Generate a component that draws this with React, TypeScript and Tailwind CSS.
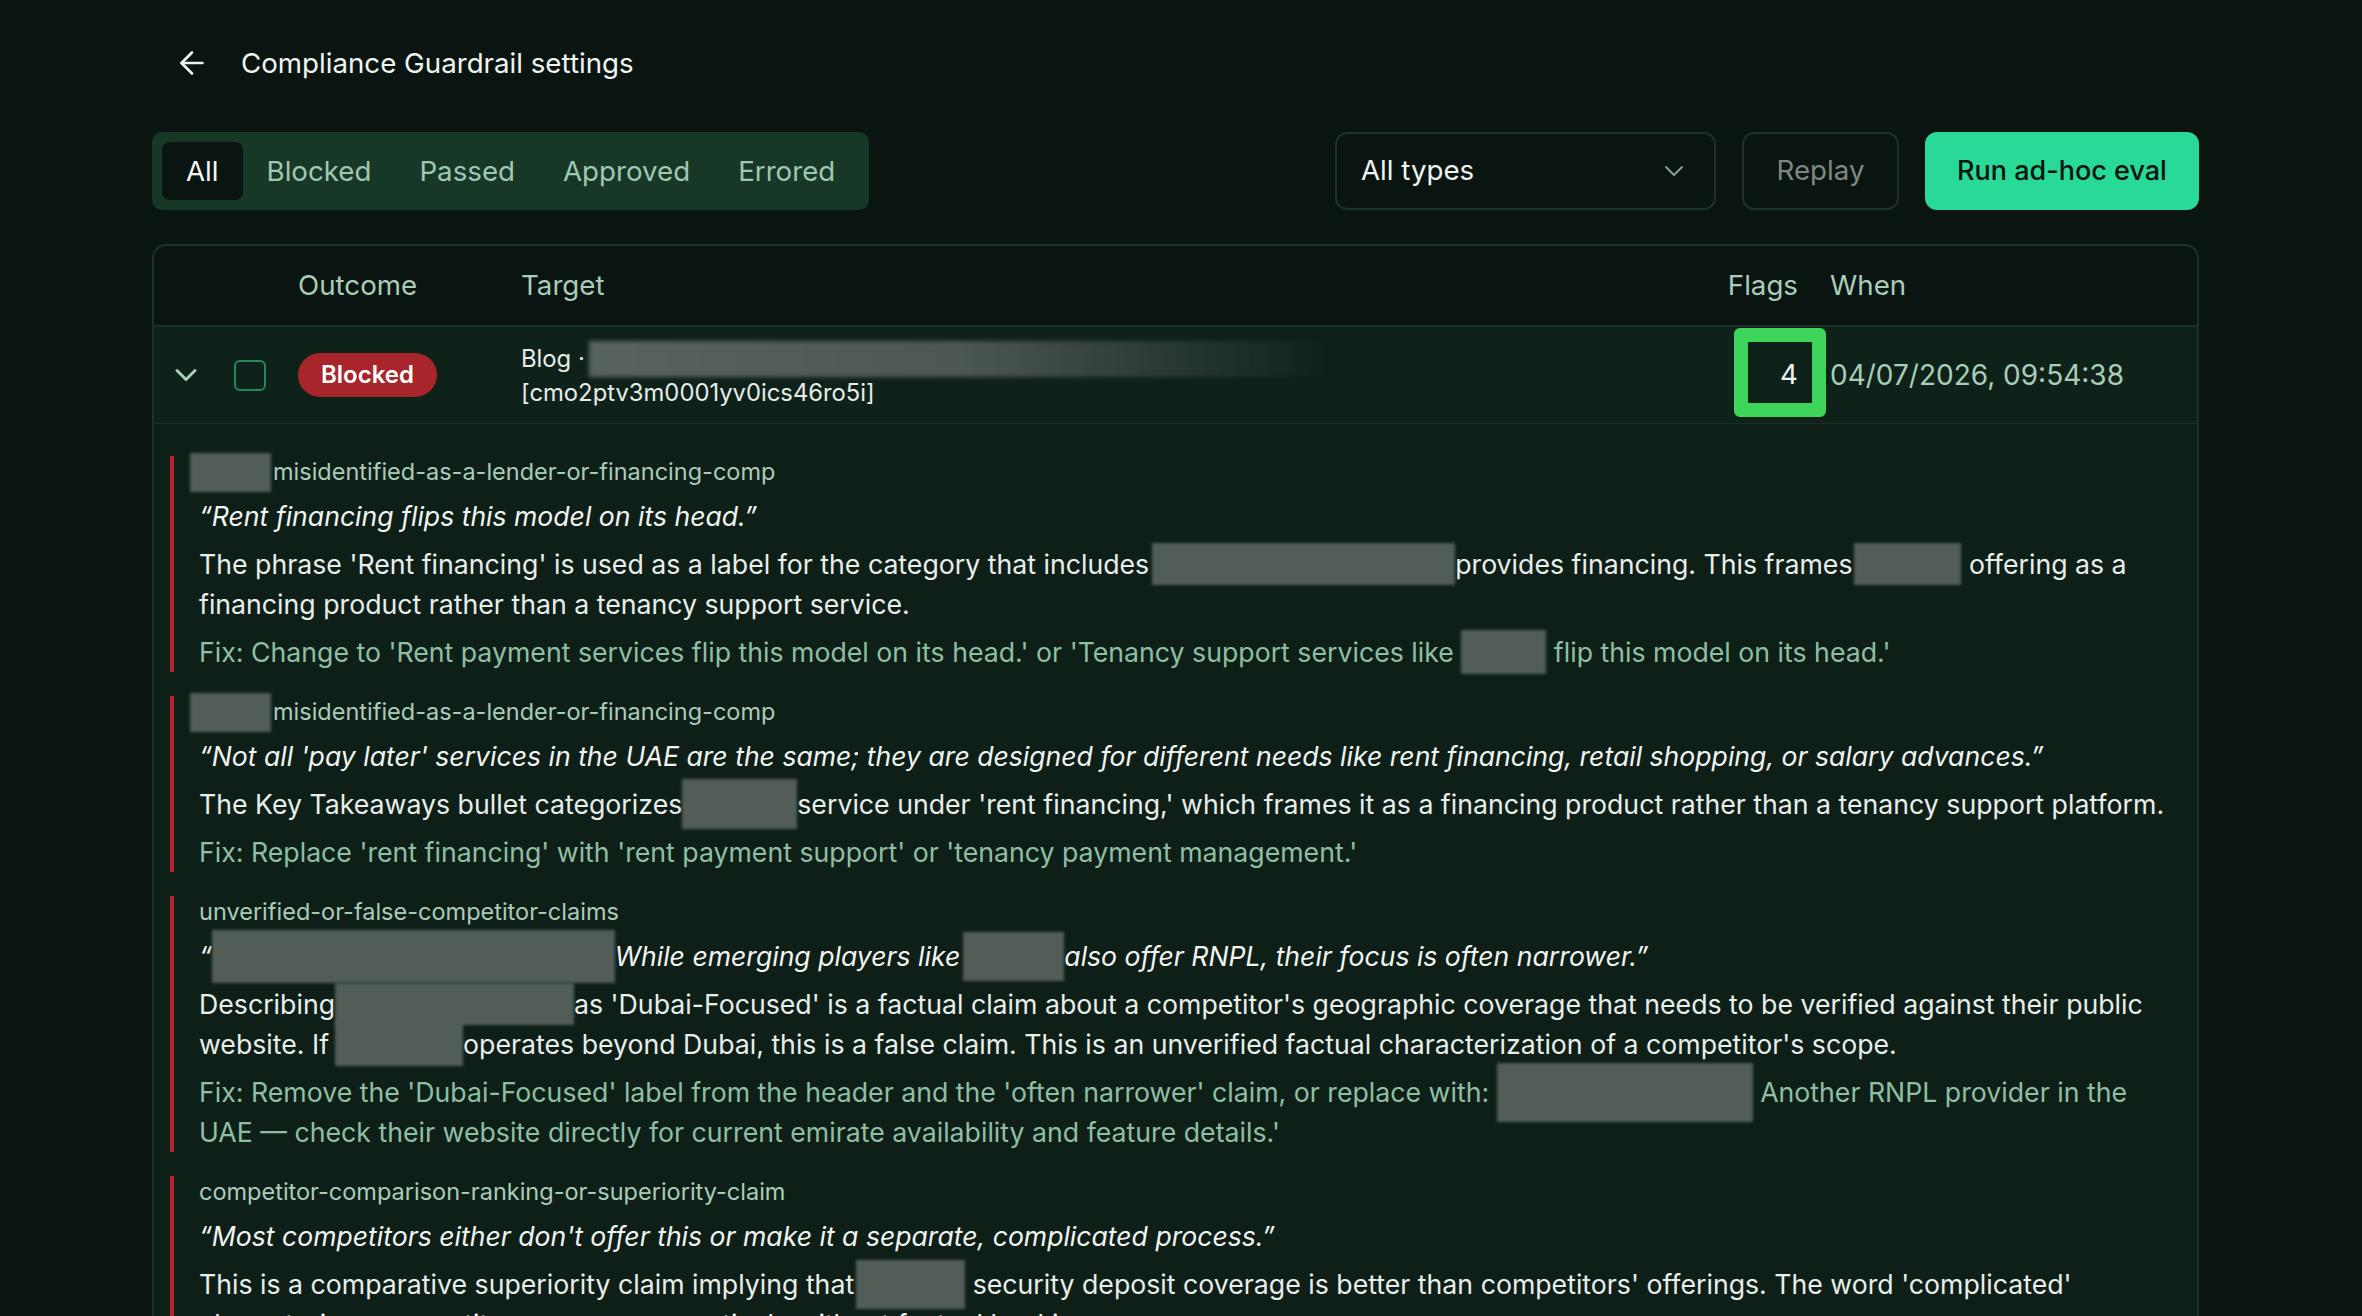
import React from 'react';
import { ArrowLeft, ChevronDown } from 'lucide-react';

const tabs = ['All', 'Blocked', 'Passed', 'Approved', 'Errored'];

// grey redaction block that sits inline with the text; negative margins keep
// the line box at its normal height
const Redact: React.FC<{ className: string }> = ({ className }) => (
  <span className={`inline-block align-top bg-[#535d58] blur-[1.5px] ${className}`} />
);

interface FlagProps {
  tag: React.ReactNode;
  quote: React.ReactNode;
  body: React.ReactNode;
  fix: React.ReactNode;
}

const FlagItem: React.FC<FlagProps> = ({ tag, quote, body, fix }) => (
  <div className="ml-[16px] border-l-4 border-[#b3262b] pl-[25px] text-[26.7px]">
    <div className="text-[23.5px] leading-[32px] text-[#a9cdb9]">{tag}</div>
    <div className="mt-2 text-[26.6px] italic leading-[40px] text-[#f1f5f2]">{quote}</div>
    <div className="mt-2 leading-[40px] text-[#e8eeea]">{body}</div>
    <div className="mt-2 leading-[40px] text-[#8fbfa3]">{fix}</div>
  </div>
);

const rowCols = 'grid grid-cols-[64px_80px_223px_1205px_104px_1fr]';

export default function App() {
  return (
    <div className="min-h-screen bg-[#0a1410] font-['Inter','Noto_Sans',sans-serif] text-[27.7px] text-[#f0f4f1]">
      <div className="ml-[152px] w-[2047px] pt-[41px]">
        {/* page header */}
        <div className="flex h-[44px] items-center gap-[31px] pl-[22px]">
          <ArrowLeft size={36} strokeWidth={1.75} className="text-[#f0f4f1]" />
          <h1 className="leading-[44px]">Compliance Guardrail settings</h1>
        </div>

        {/* filters + actions */}
        <div className="mt-[47px] flex items-center justify-between">
          <div className="flex rounded-[10px] bg-[#173827] p-[10px]">
            {tabs.map((t, i) => (
              <button
                key={t}
                className={`h-[58px] rounded-[8px] px-6 leading-[58px] ${
                  i === 0 ? 'bg-[#0a1410] text-[#f5f8f6]' : 'text-[#9fc7b2]'
                }`}
              >
                {t}
              </button>
            ))}
          </div>
          <div className="flex items-center gap-[26px]">
            <div className="flex h-[78px] w-[381px] items-center justify-between rounded-[12px] border-2 border-[#1b3227] pl-[24px] pr-[24px]">
              <span>All types</span>
              <ChevronDown size={32} strokeWidth={1.5} className="text-[#8d9a93]" />
            </div>
            <button className="h-[78px] w-[157px] rounded-[12px] border-2 border-[#1b3227] text-[#7d8882]">
              Replay
            </button>
            <button className="h-[78px] w-[274px] rounded-[12px] bg-[#29d997] text-[27px] font-medium text-[#07150e]">
              Run ad-hoc eval
            </button>
          </div>
        </div>

        {/* results table */}
        <div className="mt-[34px] overflow-hidden rounded-t-[14px] border-2 border-b-0 border-[#1b3227]">
          <div className={`${rowCols} h-[79px] items-center text-[#a9cdb9]`}>
            <div />
            <div />
            <div>Outcome</div>
            <div>Target</div>
            <div className="pr-[32px] text-right">Flags</div>
            <div>When</div>
          </div>

          <div className={`${rowCols} h-[98px] items-center border-t-2 border-[#1b3227] bg-[#0f221a]`}>
            <div className="flex justify-center">
              <ChevronDown size={36} strokeWidth={2} className="text-[#a9cdb9]" />
            </div>
            <div className="pl-[16px]">
              <div className="h-[31px] w-[32px] rounded-[6px] border-2 border-[#23885a]" />
            </div>
            <div>
              <span className="inline-flex h-[44px] items-center rounded-full bg-[#a8262b] px-[23px] text-[24px] font-semibold text-white">
                Blocked
              </span>
            </div>
            <div className="text-[23.8px] leading-[32px] text-[#e6ece8]">
              <div className="flex items-center">
                <span>Blog ·</span>
                <span className="ml-[4px] inline-block h-[36px] w-[740px] bg-linear-to-r from-[#58635d] via-[#4d5853] to-transparent blur-[2px]" />
              </div>
              <div>[cmo2ptv3m0001yv0ics46ro5i]</div>
            </div>
            <div className="relative flex h-full items-center justify-end pr-[32px]">
              <div className="absolute bottom-[6px] left-[8px] right-[4px] top-[1px] rounded-[6px] border-[14px] border-[#3ed65a]" />
              <span className="relative">4</span>
            </div>
            <div className="text-[28px] text-[#a9cdb9]">04/07/2026, 09:54:38</div>
          </div>

          {/* expanded flag details */}
          <div className="flex flex-col gap-[24px] border-t border-[#1a2f25] bg-[#0e1f18] pb-[40px] pr-[20px] pt-[32px]">
            <FlagItem
              tag={
                <>
                  <Redact className="-mb-[4px] -ml-[9px] -mt-[3px] mr-[2px] h-[39px] w-[81px]" />
                  misidentified-as-a-lender-or-financing-comp
                </>
              }
              quote="“Rent financing flips this model on its head.”"
              body={
                <>
                  The phrase 'Rent financing' is used as a label for the category that includes
                  <Redact className="-my-[1px] ml-[3px] h-[42px] w-[303px]" />
                  provides financing. This frames
                  <Redact className="-my-[1px] ml-[2px] h-[42px] w-[107px]" /> offering as a financing
                  product rather than a tenancy support service.
                </>
              }
              fix={
                <>
                  Fix: Change to 'Rent payment services flip this model on its head.' or 'Tenancy support
                  services like <Redact className="-my-[2px] h-[44px] w-[85px]" /> flip this model on its
                  head.'
                </>
              }
            />
            <FlagItem
              tag={
                <>
                  <Redact className="-mb-[4px] -ml-[9px] -mt-[3px] mr-[2px] h-[39px] w-[81px]" />
                  misidentified-as-a-lender-or-financing-comp
                </>
              }
              quote="“Not all 'pay later' services in the UAE are the same; they are designed for different needs like rent financing, retail shopping, or salary advances.”"
              body={
                <>
                  The Key Takeaways bullet categorizes
                  <Redact className="-my-[5px] h-[50px] w-[115px]" />
                  service under 'rent financing,' which frames it as a financing product rather than a
                  tenancy support platform.
                </>
              }
              fix="Fix: Replace 'rent financing' with 'rent payment support' or 'tenancy payment management.'"
            />
            <FlagItem
              tag="unverified-or-false-competitor-claims"
              quote={
                <>
                  “<Redact className="-mb-[7px] -mt-[6px] h-[53px] w-[403px]" />
                  While emerging players like
                  <Redact className="-mb-[5px] -mt-[4px] ml-[3px] h-[49px] w-[101px]" />
                  also offer RNPL, their focus is often narrower.”
                </>
              }
              body={
                <>
                  Describing
                  <Redact className="-my-[1px] h-[42px] w-[239px]" />
                  as 'Dubai-Focused' is a factual claim about a competitor's geographic coverage that needs
                  to be verified against their public website. If
                  <Redact className="-my-[2px] ml-[6px] h-[44px] w-[128px]" />
                  operates beyond Dubai, this is a false claim. This is an unverified factual
                  characterization of a competitor's scope.
                </>
              }
              fix={
                <>
                  Fix: Remove the 'Dubai-Focused' label from the header and the 'often narrower' claim, or
                  replace with: <Redact className="-mb-[10px] -mt-[9px] h-[59px] w-[256px]" /> Another
                  RNPL provider in the UAE — check their website directly for current emirate availability
                  and feature details.'
                </>
              }
            />
            <FlagItem
              tag="competitor-comparison-ranking-or-superiority-claim"
              quote="“Most competitors either don't offer this or make it a separate, complicated process.”"
              body={
                <>
                  This is a comparative superiority claim implying that
                  <Redact className="-mb-[5px] -mt-[4px] ml-[2px] h-[49px] w-[109px]" /> security deposit
                  coverage is better than competitors' offerings. The word 'complicated' characterizes
                  competitor processes negatively without factual backing.
                </>
              }
              fix="Fix: Remove the comparison and describe the feature on its own terms."
            />
          </div>
        </div>
      </div>
    </div>
  );
}
